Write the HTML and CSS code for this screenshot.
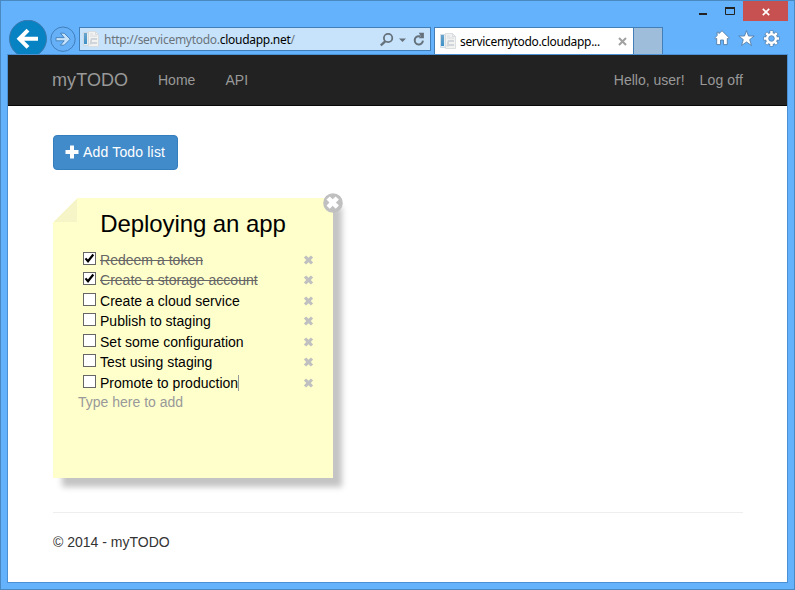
FILE: index.html
```html
<!DOCTYPE html>
<html lang="en">
<head>
<meta charset="utf-8">
<title>myTODO</title>
<link rel="stylesheet" href="styles.css">
</head>
<body>
<svg class="defs" width="0" height="0">
  <defs>
    <linearGradient id="blueStrip" x1="0" y1="0" x2="0" y2="1"><stop offset="0" stop-color="#6ba5cb"/><stop offset="1" stop-color="#3d91c8"/></linearGradient>
    <symbol id="page" viewBox="0 0 16 16">
      <path d="M.5 1.5h5v13h-5z" fill="#e5edf2" stroke="#c5d3df" stroke-width=".7"/>
      <path d="M1 2h3v11H1z" fill="url(#blueStrip)"/>
      <path d="M5.5.5h7l3 3v12h-10z" fill="#f2f2f1" stroke="#d4d8db" stroke-width=".8"/>
      <path d="M12.5.5v3h3M7 3h3M7 5h7M6 13h3" fill="none" stroke="#d0d6da" stroke-width=".8"/>
      <path d="M8 7h6v2H9v2h5v2H7v-3z" fill="#cfd5da"/>
    </symbol>
    <symbol id="remove" viewBox="0 0 10 10">
      <path d="M2.6.4 5 2.7 7.4.4 9.6 2.5 7.3 5l2.3 2.5-2.2 2.1L5 7.3 2.6 9.6.4 7.5 2.7 5 .4 2.5z" fill="currentColor"/>
    </symbol>
  </defs>
</svg>
<div class="window">
  <div class="titlebar">
    <svg class="min" width="8" height="20"><path d="M0 13h8" stroke="#222" stroke-width="2"/></svg>
    <svg class="max" width="10" height="20"><path d="M.5 6.5h9v7h-9z" fill="none" stroke="#222"/><path d="M0 7h10" stroke="#222" stroke-width="2"/></svg>
    <div class="close"><svg width="8" height="8"><path d="M.8.8l6.4 6.4M7.2.8.8 7.2" stroke="#fff" stroke-width="1.7"/></svg></div>
  </div>
  <div class="toolbar">
    <svg class="back" width="40" height="34"><circle cx="20" cy="18.8" r="18.5" fill="#0783c3" stroke="#3b78ad"/><path d="M30 18.8H12M20 10.2l-8.6 8.6 8.6 8.6" fill="none" stroke="#fff" stroke-width="4"/></svg>
    <svg class="forward" width="26" height="27"><circle cx="13" cy="13.2" r="12.2" fill="#66b0f8" stroke="#427fb9"/><path d="M6 11.6h8.2L10.4 7.2h3.8l6 6-6 6h-3.8l3.8-4.4H6z" fill="#c6e2fb" stroke="#427fb9" stroke-width=".9"/></svg>
    <div class="address">
      <svg class="favicon" width="16" height="16"><use href="#page"/></svg>
      <span class="url">http://servicemytodo.<b>cloudapp.net</b>/</span>
      <svg class="tools" width="46" height="16" fill="none" stroke="#65717b">
        <circle cx="8.1" cy="6" r="4.2" stroke-width="1.8"/><path d="M5.2 9.3.8 13.4" stroke-width="2.3"/>
        <path d="M19 6.5h7L22.5 10z" fill="#65717b" stroke="none"/>
        <path d="M42.9 8.7a4.1 4.1 0 1 1-4-4.5h1.3" stroke-width="2"/><path d="M38.8.8h5.1v5.4h-5.2l2-2z" fill="#65717b" stroke="none"/>
      </svg>
    </div>
    <div class="tab">
      <svg class="favicon" width="16" height="16"><use href="#page"/></svg>
      <span class="tab-title">servicemytodo.cloudapp...</span>
      <svg class="tab-close" width="9" height="9"><path d="M1 1l7 7M8 1 1 8" stroke="#a1a1a1" stroke-width="2"/></svg>
    </div>
    <div class="newtab"></div>
    <div class="actions">
      <svg width="16" height="16" viewBox="0 0 16 16"><path d="M8 .7 15.3 8l-1 1-1-.6v6.2H9.5V10h-3v4.6H2.7V8.4l-1 .6-1-1 2.4-2.4V2.2h2v1.4z" fill="#fff" stroke="#537fa9" stroke-width=".9"/></svg>
      <svg width="17" height="17" viewBox="0 0 17 17"><path d="M8.5.7 10.5 6h5.7l-4.5 3.6 1.8 5.9-5-3.5-5 3.5 1.8-5.9L.8 6h5.7z" fill="#fff" stroke="#537fa9" stroke-width=".9"/></svg>
      <svg width="17" height="17" viewBox="0 0 17 17"><g stroke="#537fa9" stroke-width="4"><path d="M8.5.5v16M.5 8.5h16M2.8 2.8l11.4 11.4M14.2 2.8 2.8 14.2"/></g><circle cx="8.5" cy="8.5" r="6.3" fill="#537fa9"/><g stroke="#fff" stroke-width="2.5"><path d="M8.5 1v15M1 8.5h15M3.2 3.2l10.6 10.6M13.8 3.2 3.2 13.8"/></g><circle cx="8.5" cy="8.5" r="5.5" fill="#fff"/><circle cx="8.5" cy="8.5" r="2.8" fill="#64b1fa" stroke="#537fa9" stroke-width=".8"/></svg>
    </div>
  </div>
  <div class="page">
    <nav class="navbar">
      <a class="brand">myTODO</a><a class="home">Home</a><a class="api">API</a>
      <a class="hello">Hello, user!</a><a class="logoff">Log off</a>
    </nav>
    <main class="content">
      <button class="add"><svg width="14" height="14"><path d="M5 .5h4V5h4.5v4H9v4.5H5V9H.5V5H5z" fill="#fff"/></svg><span>Add Todo list</span></button>
      <section class="note">
        <div class="fold"></div>
        <svg class="note-close" width="20" height="20"><circle cx="10" cy="10" r="9.8" fill="#c0c0c0"/><path d="M6.8 3.4 9.7 6.3l2.9-2.9L15.9 6.6 12.9 9.5l3 3.1-3.2 3.1-3-3-3 3-3.2-3.1 3-3.1-3-2.9z" fill="#fff"/></svg>
        <h1>Deploying an app</h1>
        <ul>
          <li class="done"><i class="box"><svg width="11" height="11"><path d="M1.5 5.4 4 8.3 9.3 1.5" fill="none" stroke="#000" stroke-width="2.2"/></svg></i><span>Redeem a token</span><svg class="x"><use href="#remove"/></svg></li>
          <li class="done"><i class="box"><svg width="11" height="11"><path d="M1.5 5.4 4 8.3 9.3 1.5" fill="none" stroke="#000" stroke-width="2.2"/></svg></i><span>Create a storage account</span><svg class="x"><use href="#remove"/></svg></li>
          <li><i class="box"></i><span>Create a cloud service</span><svg class="x"><use href="#remove"/></svg></li>
          <li><i class="box"></i><span>Publish to staging</span><svg class="x"><use href="#remove"/></svg></li>
          <li><i class="box"></i><span>Set some configuration</span><svg class="x"><use href="#remove"/></svg></li>
          <li><i class="box"></i><span>Test using staging</span><svg class="x"><use href="#remove"/></svg></li>
          <li><i class="box"></i><span class="editing">Promote to production</span><svg class="x"><use href="#remove"/></svg></li>
        </ul>
        <div class="placeholder">Type here to add</div>
      </section>
      <footer>© 2014 - myTODO</footer>
    </main>
  </div>
</div>
</body>
</html>
```
FILE: styles.css
```css
* { box-sizing: border-box; }
body { margin: 0; font: 14px/20px "Liberation Sans", Arial, sans-serif; color: #333; overflow: hidden; }
svg { display: block; flex: none; }
.defs { position: absolute; }
.window { width: 795px; height: 590px; border: 1px solid #4a88c2; background: #64b1fc; display: flex; flex-direction: column; }

.titlebar { height: 20px; display: flex; justify-content: flex-end; padding-right: 6px; flex: none; }
.min { margin-right: 18px; }
.max { margin-right: 8px; }
.close { width: 45px; height: 20px; background: #c75050; display: flex; align-items: center; justify-content: center; padding-top: 1px; }

.toolbar { height: 33px; display: flex; align-items: flex-start; flex: none; }
.back { margin: -1px 2px 0 7px; }
.forward { margin: 5px 3px 0 0; }
.address { width: 352px; height: 24px; margin-top: 6px; border: 1px solid #427fb9; background: #c7e3fb; display: flex; align-items: center; padding-left: 3px; }
.url { font: 12px/20px "Noto Sans", sans-serif; letter-spacing: -.28px; color: #6b747b; margin: 2px 0 0 5px; white-space: nowrap; width: 276px; }
.url b { font-weight: normal; color: #000; }
.tools { margin-top: 1px; }
.tab { width: 200px; height: 27px; margin: 6px 0 0 3px; border: 1px solid #427fb9; border-bottom: 0; background: #fff; display: flex; align-items: center; padding-left: 5px; }
.tab-title { font: 12px/20px "Noto Sans", sans-serif; letter-spacing: -.33px; color: #000; margin: 2px 0 0 4px; width: 158px; white-space: nowrap; }
.newtab { width: 30px; height: 27px; margin: 6px 0 0 -1px; border: 1px solid #427fb9; border-bottom: 0; background: #9ebddb; }
.actions { display: flex; gap: 8px; margin: 9px 0 0 51px; }

.page { flex: 1; margin: 0 6px 6px; border: 1px solid #4a90d2; background: #fff; }
.navbar { height: 51px; background: #222; border-bottom: 1px solid #080808; padding: 0 44px; display: flex; align-items: center; color: #999; white-space: nowrap; }
.brand { font-size: 18px; width: 106px; letter-spacing: .08px; }
.home { width: 67.5px; }
.hello { margin-left: auto; margin-right: 15px; }
.logoff { letter-spacing: .12px; }

.content { padding: 29px 44px 0 45px; }
.add { height: 35px; width: 125px; display: flex; align-items: center; gap: 4px; padding: 0 11px 1px; border: 1px solid #357ebd; border-radius: 4px; background: #428bca; color: #fff; font: inherit; letter-spacing: .17px; white-space: nowrap; }
.note { position: relative; width: 280px; height: 280px; margin-top: 28px; padding-top: 11px; background: #ffffcc; box-shadow: 9px 9px 6px #c4c4c4; color: #000; }
.fold { position: absolute; top: 0; left: 0; width: 24px; height: 24px; background: linear-gradient(135deg, #fff 50%, #f5f5c8 50%); }
.note-close { position: absolute; right: -10px; top: -5px; }
h1 { margin: 0; font-size: 24px; line-height: 30px; font-weight: normal; text-align: center; letter-spacing: -.08px; }
ul { list-style: none; margin: 10.6px 0 0; padding: 0 19px 0 30px; }
li { height: 20.5px; display: flex; align-items: center; letter-spacing: .02px; }
.box { width: 13px; height: 13px; border: 1px solid #666; background: #fff; margin: -3px 4px 0 0; flex: none; }
.done span { color: #666; text-decoration: line-through; }
.editing { border-right: 1px solid #999; line-height: 16px; }
.x { width: 11px; height: 10px; margin-left: auto; color: #c0c0c0; }
.placeholder { margin-top: -.6px; padding-left: 25px; color: #999; line-height: 19px; }
footer { margin-top: 34px; border-top: 1px solid #eee; padding-top: 19px; }
```
